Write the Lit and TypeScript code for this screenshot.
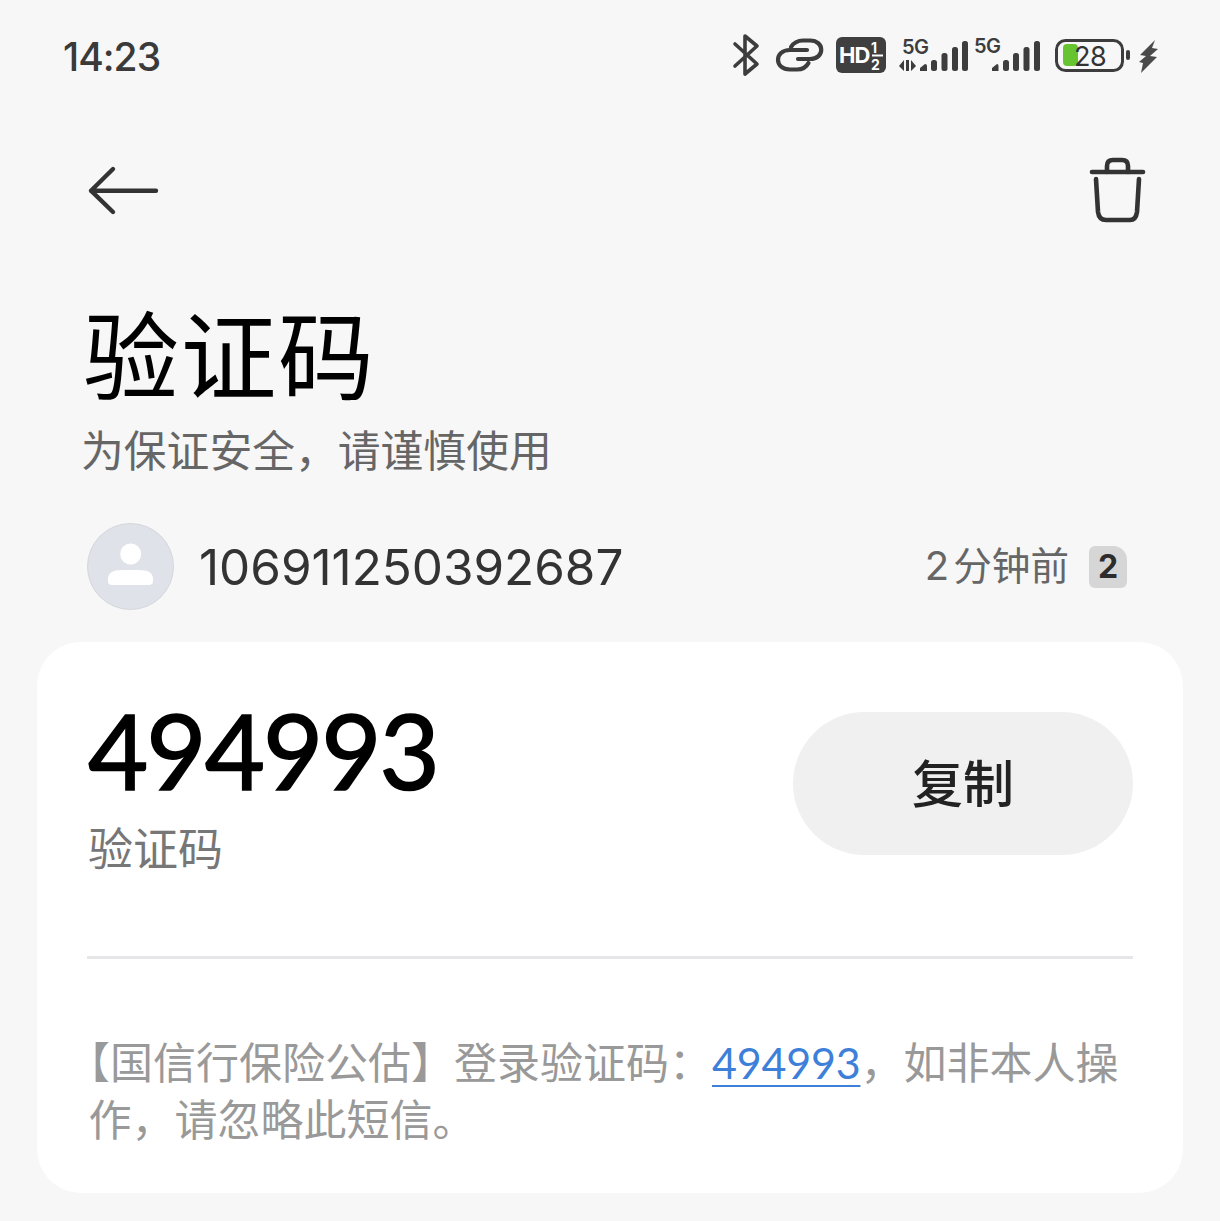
import { LitElement, html, css, svg } from "lit";
import { customElement } from "lit/decorators.js";

const statusIcons = svg`
  <g fill="none" stroke="#3d3d3d" stroke-width="3.6" stroke-linecap="round" stroke-linejoin="round">
    <path d="M735 44 L757 64 L745 74 V36 L757 46 L735 66" />
    <path d="M791 47 Q795 40.5 803 40.5 H810 C825 40.5 825 59 810 59 H798" stroke-width="4.2" />
    <path d="M807 50 H790 C774 50 774 69.5 790 69.5 H797 Q805 69.5 808.5 63" stroke-width="4.2" />
  </g>
  <rect x="836" y="37" width="50" height="36" rx="6" fill="#3f3f3f" />
  <text x="839" y="63" class="hd">HD</text>
  <text x="871" y="53" class="hdn">1</text>
  <text x="871" y="70" class="hdn">2</text>
  <rect x="872" y="54.5" width="11" height="2" fill="#fff" />

  <text x="902" y="54" class="g5">5G</text>
  <path d="M899 66 L904 60 V71 Z M906 60 H909 V71 H906 Z M911 60 L916 66 L911 71 Z" fill="#3d3d3d" />
  <path d="M920 71 V68 L925 64 Q927 64 927 66 V71 Z" fill="#3d3d3d" />
  <g fill="#3d3d3d">
    <rect x="931" y="60" width="6" height="11" rx="2.5" />
    <rect x="941.5" y="53" width="6" height="18" rx="2.5" />
    <rect x="952" y="47" width="6" height="24" rx="2.5" />
    <rect x="962" y="41" width="6" height="30" rx="2.5" />
  </g>

  <text x="974" y="53" class="g5">5G</text>
  <path d="M992 71 V68 L997 64 Q998.5 64 998.5 66 V71 Z" fill="#3d3d3d" />
  <g fill="#3d3d3d">
    <rect x="1003" y="60" width="6" height="11" rx="2.5" />
    <rect x="1013" y="53" width="6" height="18" rx="2.5" />
    <rect x="1023.5" y="47" width="6" height="24" rx="2.5" />
    <rect x="1034" y="41" width="6" height="30" rx="2.5" />
  </g>

  <rect x="1056.5" y="40.5" width="66" height="30" rx="9" fill="none" stroke="#3d3d3d" stroke-width="3" />
  <rect x="1063" y="44" width="15" height="22" rx="4" fill="#66c430" />
  <text x="1074" y="66" class="batt">28</text>
  <rect x="1126" y="50" width="4" height="10" rx="2" fill="#3d3d3d" />
  <path d="M1155 40 L1140 55 L1146 56 L1139 62 L1143 63 L1141 73 L1157 57 L1150 56 L1158 49 L1152 48 Z" fill="#4a4a4a" />
`;

@customElement("app-root")
export class AppRoot extends LitElement {
  static styles = css`
    :host {
      display: block;
      height: 1221px;
      overflow: hidden;
      background: #f7f7f7;
      font-family: "Noto Sans CJK SC", "Noto Sans", sans-serif;
      color: #333;
    }
    .status {
      display: flex;
      justify-content: space-between;
      align-items: center;
      height: 50px;
      padding: 32px 60px 0 63px;
    }
    .time {
      font-family: "Inter", sans-serif;
      font-size: 39px;
      font-weight: 500;
      line-height: 50px;
      color: #3a3a3a;
      letter-spacing: -1px;
    }
    .status svg {
      display: block;
    }
    .status text.hd {
      font: 700 22px "Inter", sans-serif;
      fill: #fff;
      letter-spacing: -1px;
    }
    .status text.hdn {
      font: 700 14px "Inter", sans-serif;
      fill: #fff;
    }
    .status text.g5 {
      font: 600 20px "Inter", sans-serif;
      fill: #3d3d3d;
      letter-spacing: -0.5px;
    }
    .status text.batt {
      font: 400 27px "Inter", sans-serif;
      fill: #333;
      letter-spacing: -0.5px;
    }
    .nav {
      display: flex;
      justify-content: space-between;
      align-items: flex-start;
      padding: 79px 68px 0 83px;
      height: 76px;
    }
    .nav svg {
      display: block;
    }
    .nav .trash {
      margin-top: -6px;
    }
    h1 {
      margin: 0;
      padding: 57px 0 0 83px;
      font-size: 96px;
      line-height: 113px;
      font-weight: 400;
      letter-spacing: 1.5px;
      color: #000;
    }
    .sub {
      margin-top: 16px;
      padding: 0 0 0 81px;
      font-size: 42.8px;
      line-height: 50px;
      color: #666;
    }
    .sender {
      display: flex;
      align-items: center;
      margin-top: 50px;
      padding: 0 93px 0 87px;
      height: 87px;
    }
    .avatar {
      display: block;
      flex: none;
    }
    .num {
      margin-left: 25px;
      font-family: "Inter", sans-serif;
      font-size: 49.4px;
      color: #333;
      flex: 1;
    }
    .ago {
      font-size: 38.6px;
      line-height: 46px;
      margin-top: -4px;
      color: #666;
    }
    .ago .d {
      font-family: "Inter", sans-serif;
      font-size: 40px;
      margin-right: 4px;
    }
    .badge {
      width: 38px;
      height: 42px;
      margin-left: 20px;
      background: #d6d6d6;
      border-radius: 6px 14px 6px 6px;
      text-align: center;
      font: 700 32px/42px "Inter", sans-serif;
      color: #2c2c2c;
    }
    .card {
      margin: 32px 37px 0;
      height: 551px;
      box-sizing: border-box;
      padding: 70px 50px 0;
      background: #fff;
      border-radius: 44px;
    }
    .top {
      display: flex;
      justify-content: space-between;
      align-items: flex-start;
      box-sizing: border-box;
      height: 247px;
      border-bottom: 3px solid #e6e6e8;
    }
    .digits {
      font-family: "Lato", sans-serif;
      font-size: 104px;
      line-height: 84px;
      font-weight: 400;
      letter-spacing: -2px;
      color: #000;
      margin-top: -4px;
      padding-left: 1px;
      -webkit-text-stroke: 1.6px #000;
    }
    .label {
      font-size: 45px;
      line-height: 56px;
      margin-top: 27px;
      padding-left: 1px;
      color: #777;
    }
    .copy {
      all: unset;
      box-sizing: border-box;
      width: 340px;
      height: 143px;
      padding-bottom: 6px;
      border-radius: 72px;
      background: #f0f0f0;
      text-align: center;
      font-family: inherit;
      font-size: 51px;
      font-weight: 500;
      color: #222;
    }
    .msg {
      margin-top: 74px;
      padding-left: 1.5px;
      width: 1046px;
      font-size: 43px;
      line-height: 55px;
      color: #999;
      text-spacing-trim: trim-start;
    }
    .msg a {
      font-family: "Lato", sans-serif;
      color: #3d7fd9;
      letter-spacing: -0.2px;
      text-decoration: underline;
      text-decoration-thickness: 2px;
      text-underline-offset: 6px;
    }
  `;

  render() {
    return html`
      <div class="status">
        <span class="time">14:23</span>
        <svg width="430" height="50" viewBox="730 32 430 50">${statusIcons}</svg>
      </div>
      <div class="nav">
        <svg width="80" height="60" viewBox="83 161 80 60" fill="none" stroke="#333" stroke-width="4.4" stroke-linecap="round" stroke-linejoin="round">
          <path d="M113 169 L91 190.7 L113 212 M91 190.7 H156" />
        </svg>
        <svg class="trash" width="68" height="72" viewBox="1084 155 68 72" fill="none" stroke="#333" stroke-width="4.6" stroke-linecap="round" stroke-linejoin="round">
          <path d="M1092 172 H1143" />
          <path d="M1107 172 V166 Q1107 160 1113 160 H1122 Q1128 160 1128 166 V172" />
          <path d="M1096 179 L1098 212 Q1099 220 1106 220 H1130 Q1136 220 1137 212 L1139 179" />
        </svg>
      </div>
      <h1>验证码</h1>
      <div class="sub">为保证安全，请谨慎使用</div>
      <div class="sender">
        <svg class="avatar" width="87" height="87" viewBox="87 523 87 87">
          <circle cx="130.5" cy="566.5" r="43" fill="#dfe2e8" stroke="#d3d6db" stroke-width="1" />
          <circle cx="130.7" cy="554" r="10.5" fill="#fff" />
          <path d="M108 579 Q108 570 122 570 H139 Q153 570 153 579 V581 Q153 585 149 585 H112 Q108 585 108 581 Z" fill="#fff" />
        </svg>
        <span class="num">106911250392687</span>
        <span class="ago"><span class="d">2</span>分钟前</span>
        <span class="badge">2</span>
      </div>
      <div class="card">
        <div class="top">
          <div class="code">
            <div class="digits">494993</div>
            <div class="label">验证码</div>
          </div>
          <button class="copy">复制</button>
        </div>
        <div class="msg">【国信行保险公估】登录验证码：<a>494993</a>，如非本人操作，请忽略此短信。</div>
      </div>
    `;
  }
}
